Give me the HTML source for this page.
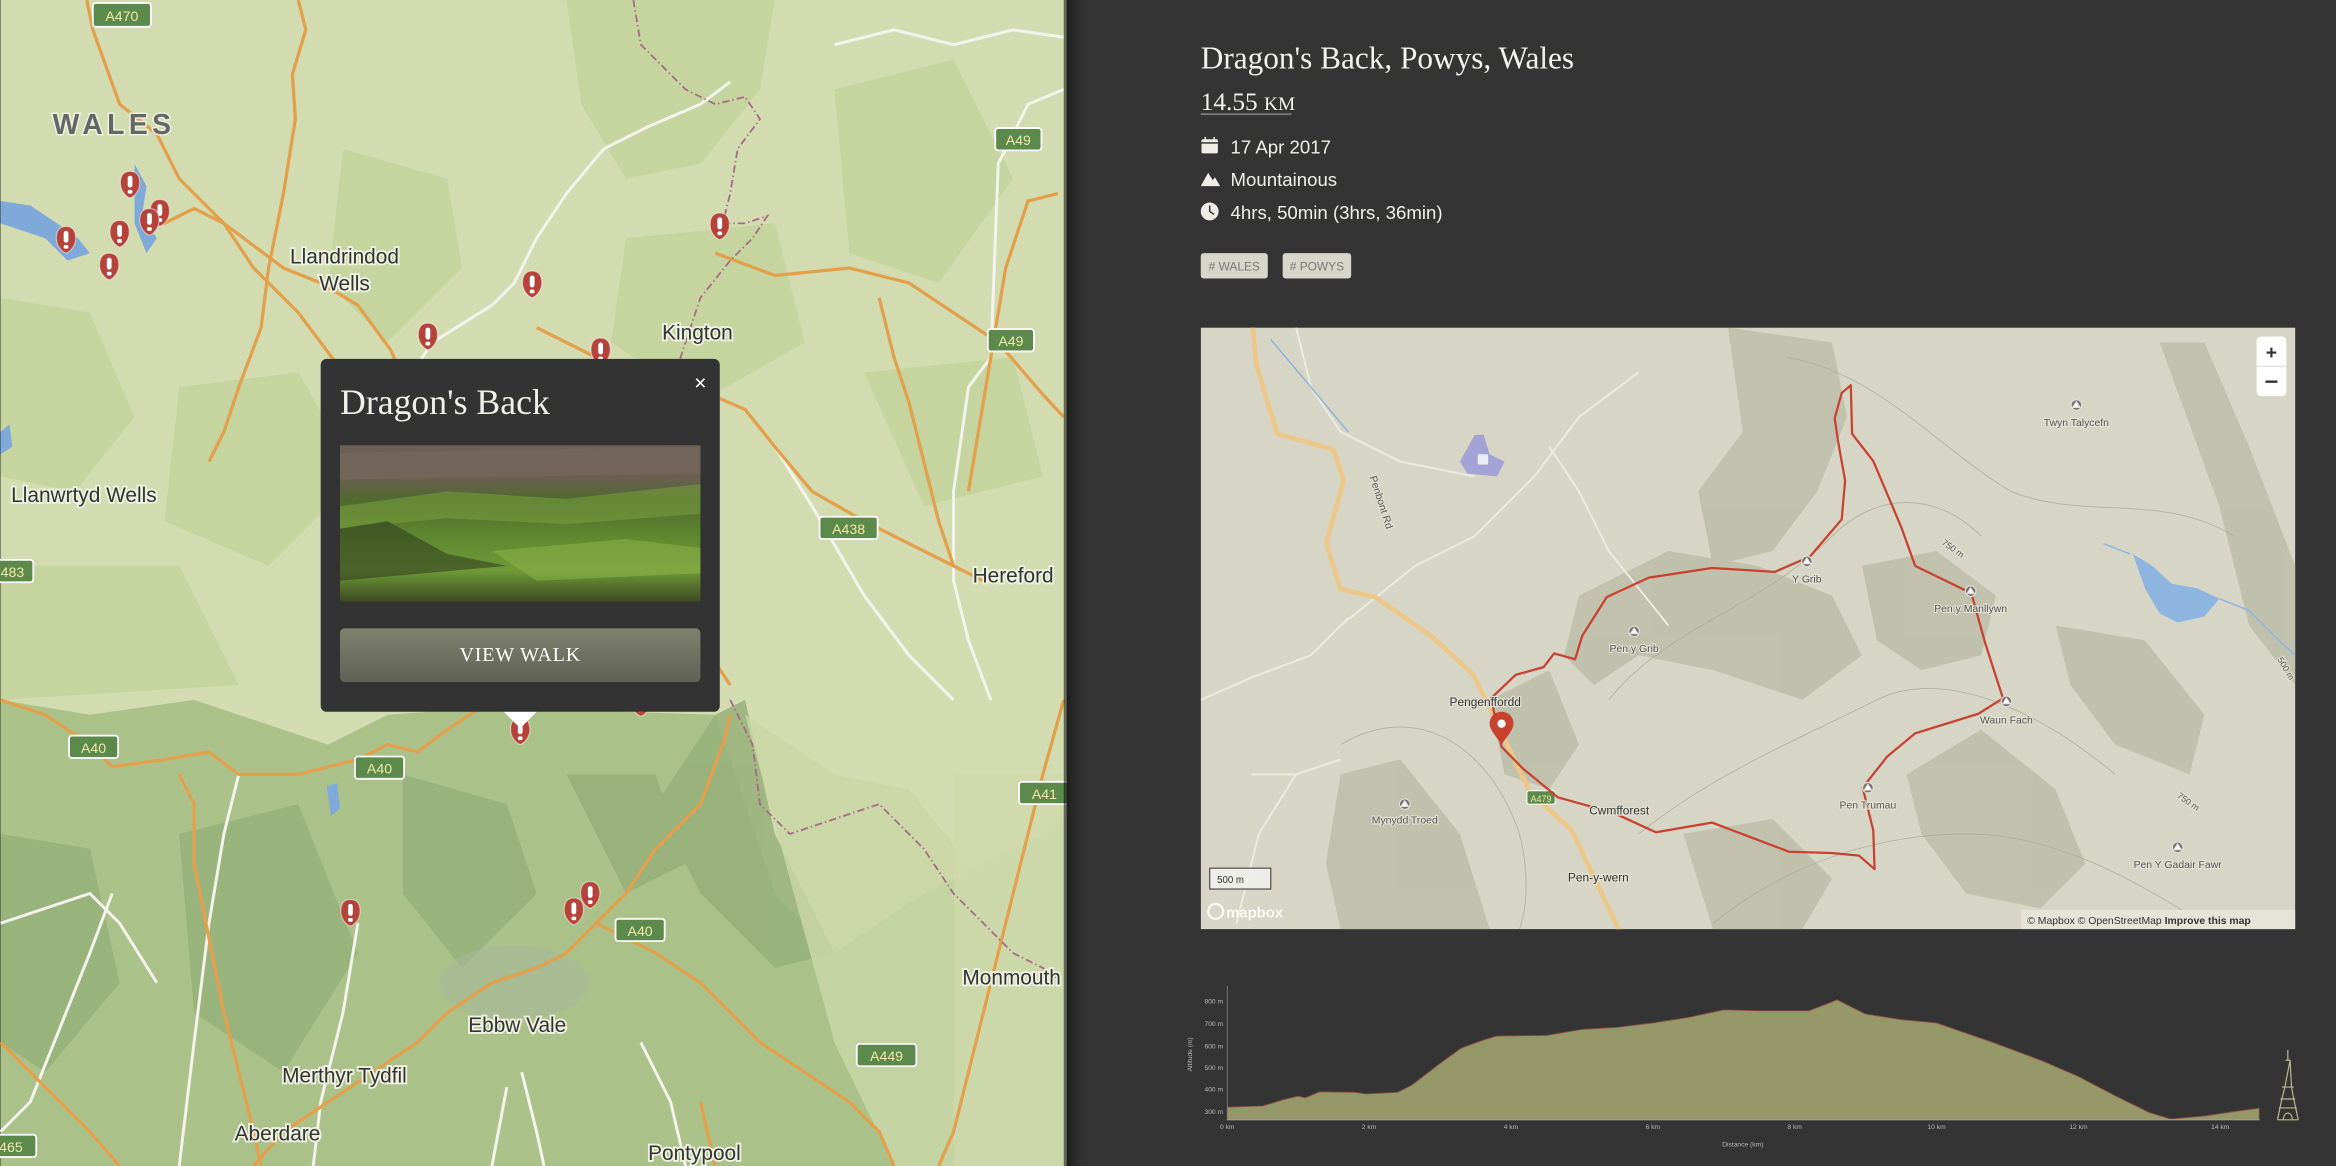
<!DOCTYPE html>
<html><head><meta charset="utf-8"><style>
html,body{margin:0;padding:0;background:#333;overflow:hidden}
svg{display:block}
</style></head><body>
<svg width="2336" height="1166" viewBox="0 0 1568 783" xmlns="http://www.w3.org/2000/svg" font-family="Liberation Sans, sans-serif">
<defs>
<linearGradient id="sh" x1="0" x2="1"><stop offset="0" stop-color="#000" stop-opacity="0.55"/><stop offset="1" stop-color="#333" stop-opacity="0"/></linearGradient>
<linearGradient id="btn" x1="0" y1="0" x2="0" y2="1"><stop offset="0" stop-color="#80836f"/><stop offset="1" stop-color="#5f6254"/></linearGradient>
<linearGradient id="photo" x1="0" y1="0" x2="0" y2="1"><stop offset="0" stop-color="#6d5f55"/><stop offset="0.22" stop-color="#6a6050"/><stop offset="0.35" stop-color="#4f6a2e"/><stop offset="0.6" stop-color="#5f8a30"/><stop offset="0.8" stop-color="#6f9a38"/><stop offset="1" stop-color="#3e4a22"/></linearGradient>
<g id="mk"><path d="M0,-9 C5,-9 6.5,-5 6.5,-1 C6.5,4 3,8 0,9 C-3,8 -6.5,4 -6.5,-1 C-6.5,-5 -5,-9 0,-9Z" fill="#b5433a" stroke="#fff" stroke-width="0.8" stroke-opacity="0.5"/><rect x="-1.6" y="-6" width="3.2" height="8" rx="1.6" fill="#fff"/><rect x="-1.6" y="3.5" width="3.2" height="2.5" rx="1" fill="#fff"/></g>
<g id="pk"><circle r="3.2" fill="#7a6f7a"/><path d="M-1.8,1.2 L0,-1.6 L1.8,1.2Z" fill="#fff"/></g>
</defs>

<!-- LEFT MAP -->
<rect x="0" y="0" width="716" height="783" fill="#d3dcb0"/>
<g fill="#c3d39c" opacity="0.8">
<path d="M380,0 L520,0 L510,60 L470,110 L420,120 L390,70Z"/>
<path d="M560,60 L640,40 L680,120 L630,190 L570,170Z"/>
<path d="M230,100 L300,120 L310,180 L260,230 L220,190Z"/>
<path d="M0,200 L60,210 L90,280 L50,330 L0,320Z"/>
<path d="M120,260 L200,250 L240,320 L180,380 L110,350Z"/>
<path d="M420,160 L520,150 L540,230 L470,270 L410,230Z"/>
<path d="M580,250 L680,240 L700,320 L620,340Z"/>
<path d="M0,380 L120,380 L160,460 L0,470Z"/>
</g>
<path d="M0,470 L60,480 L130,470 L220,500 L260,480 L330,475 L480,480 L500,540 L520,600 L560,640 L620,600 L700,560 L716,545 L716,783 L0,783Z" fill="#aac28a"/>
<g fill="#97b07a" opacity="0.85">
<path d="M480,480 L500,470 L520,560 L560,640 L520,650 L470,600 L440,540Z"/>
<path d="M120,560 L200,540 L240,640 L190,720 L130,680Z"/>
<path d="M0,560 L60,570 L80,660 L30,720 L0,700Z"/>
<path d="M270,520 L340,540 L360,600 L310,650 L270,600Z"/>
<path d="M380,520 L440,520 L460,580 L420,600Z"/>
</g>
<path d="M500,480 L560,520 L610,530 L650,580 L700,560 L716,540 L716,783 L600,783 L560,700Z" fill="#c9d6a6" opacity="0.85"/>
<path d="M640,520 L716,520 L716,783 L640,783Z" fill="#cfd9ad" opacity="0.8"/>
<ellipse cx="345" cy="660" rx="50" ry="25" fill="#a6b69a" opacity="0.6"/>
<!-- water -->
<path d="M0,135 L20,138 L38,150 L52,160 L60,170 L45,175 L30,160 L0,150Z" fill="#7fa9d9"/>
<path d="M90,110 L98,125 L95,145 L105,160 L98,170 L90,150Z" fill="#7fa9d9"/>
<path d="M219,528 L226,526 L228,543 L222,548Z" fill="#7fa9d9"/>
<path d="M0,290 L6,285 L8,300 L0,305Z" fill="#7fa9d9"/>
<!-- white roads -->
<g fill="none" stroke="#f3f3ec" stroke-width="2">
<path d="M714,60 L690,70 L670,110 L665,240 L650,260 L640,330 L640,390 L650,430 L665,470"/>
<path d="M490,55 L470,70 L435,85 L405,100 L380,130 L360,160 L345,190 L330,205 L290,230 L270,260"/>
<path d="M560,30 L600,20 L640,30 L680,20 L714,25"/>
<path d="M520,300 L545,340 L580,400 L610,440 L640,470"/>
<path d="M75,600 L60,640 L40,690 L20,740 L0,760"/>
<path d="M105,660 L80,620 L60,600 L0,620"/>
<path d="M160,520 L150,560 L140,620 L130,700 L120,783"/>
<path d="M240,620 L230,680 L215,740 L210,783"/>
<path d="M350,720 L360,760 L365,783"/>
<path d="M430,700 L450,740 L460,783"/>
<path d="M340,730 L330,783"/>
</g>
<!-- orange roads -->
<g fill="none" stroke="#e2a04c" stroke-width="2.2">
<path d="M58,0 L62,20 L80,70 L105,90 L120,120 L150,150 L170,180 L200,210 L215,230 L230,250 L250,280 L270,310 L290,340 L310,360"/>
<path d="M200,0 L205,20 L196,50 L198,80 L190,130 L180,180 L175,220 L160,260 L150,290 L140,310"/>
<path d="M105,145 L110,150 L130,140 L150,150 L170,165 L190,180 L215,190 L240,205 L262,235 L280,275 L300,300"/>
<path d="M360,220 L410,245 L440,255 L470,262 L500,275 L520,300 L545,330 L580,350 L620,370 L660,390"/>
<path d="M480,170 L520,185 L570,180 L610,190 L640,210 L670,230 L700,265 L714,280"/>
<path d="M710,130 L690,135 L675,180 L665,240 L655,300 L650,330"/>
<path d="M300,365 L330,380 L360,395 L400,400 L440,420 L470,430 L490,460"/>
<path d="M0,470 L30,480 L60,500 L75,515 L110,510 L140,505 L160,520 L200,520 L240,510 L260,500 L280,505 L300,490 L330,470"/>
<path d="M490,480 L485,500 L470,540 L440,570 L420,600 L400,620 L380,640 L360,650 L330,660 L300,680 L280,700 L250,720 L220,740 L190,760 L170,783"/>
<path d="M400,620 L420,630 L440,640 L470,660 L490,680 L510,700 L540,720 L570,740 L590,760 L600,783"/>
<path d="M120,520 L130,540 L130,580 L140,630 L150,680 L160,720 L170,760 L175,783"/>
<path d="M470,740 L480,783"/>
<path d="M714,470 L700,520 L690,560 L680,600 L670,640 L660,680 L650,720 L640,760 L630,783"/>
<path d="M590,200 L600,240 L610,270 L620,310 L630,350 L640,380"/>
<path d="M0,700 L20,720 L40,740 L60,760 L80,783"/>
</g>
<!-- border -->
<path d="M425,0 L430,30 L460,60 L480,70 L500,65 L510,80 L495,100 L490,130 L485,150 L500,150 L515,145 L505,160 L490,175 L470,200 L460,230 L450,260 L440,290 M490,470 L505,500 L510,540 L530,560 L560,550 L590,540 L620,570 L640,600 L660,620 L680,640 L700,650 L714,660" fill="none" stroke="#a66a86" stroke-width="1.2" stroke-dasharray="5,2,1,2"/>
<!-- shields -->
<g font-family="Liberation Sans Narrow, Liberation Sans, sans-serif" font-size="9.5" fill="#f3e9a8" text-anchor="middle">
<rect x="62" y="2" width="39" height="16" rx="2" fill="#5b8a4c" stroke="#fff" stroke-width="1.2"/><text x="81.5" y="14">A470</text>
<rect x="668" y="86" width="31" height="15" rx="2" fill="#5b8a4c" stroke="#fff" stroke-width="1.2"/><text x="683.5" y="97.5">A49</text>
<rect x="663" y="221" width="31" height="15" rx="2" fill="#5b8a4c" stroke="#fff" stroke-width="1.2"/><text x="678.5" y="232.5">A49</text>
<rect x="550" y="347" width="39" height="15" rx="2" fill="#5b8a4c" stroke="#fff" stroke-width="1.2"/><text x="569.5" y="358.5">A438</text>
<rect x="-6" y="376" width="28" height="15" rx="2" fill="#5b8a4c" stroke="#fff" stroke-width="1.2"/><text x="8" y="387.5">483</text>
<rect x="46" y="494" width="33" height="15" rx="2" fill="#5b8a4c" stroke="#fff" stroke-width="1.2"/><text x="62.5" y="505.5">A40</text>
<rect x="238" y="508" width="33" height="15" rx="2" fill="#5b8a4c" stroke="#fff" stroke-width="1.2"/><text x="254.5" y="519.5">A40</text>
<rect x="684" y="525" width="34" height="15" rx="2" fill="#5b8a4c" stroke="#fff" stroke-width="1.2"/><text x="701" y="536.5">A41</text>
<rect x="413" y="617" width="33" height="15" rx="2" fill="#5b8a4c" stroke="#fff" stroke-width="1.2"/><text x="429.5" y="628.5">A40</text>
<rect x="575" y="701" width="40" height="15" rx="2" fill="#5b8a4c" stroke="#fff" stroke-width="1.2"/><text x="595" y="712.5">A449</text>
<rect x="-10" y="762" width="34" height="15" rx="2" fill="#5b8a4c" stroke="#fff" stroke-width="1.2"/><text x="7" y="773.5">465</text>
</g>
<!-- place labels -->
<g font-family="Liberation Sans Narrow, Liberation Sans, sans-serif" font-size="14" fill="#333" stroke="#eef0e0" stroke-width="2.5" paint-order="stroke" text-anchor="middle">
<text x="231" y="177">Llandrindod</text><text x="231" y="195">Wells</text>
<text x="468" y="228">Kington</text>
<text x="56" y="337">Llanwrtyd Wells</text>
<text x="680" y="391">Hereford</text>
<text x="679" y="661">Monmouth</text>
<text x="347" y="693">Ebbw Vale</text>
<text x="231" y="727">Merthyr Tydfil</text>
<text x="186" y="766">Aberdare</text>
<text x="466" y="779">Pontypool</text>
</g>
<text x="35" y="90" font-size="19" font-weight="bold" fill="#666" letter-spacing="3" stroke="#eef0e0" stroke-width="2" paint-order="stroke">WALES</text>
<!-- markers -->
<use href="#mk" x="87" y="124"/><use href="#mk" x="107" y="143"/><use href="#mk" x="100" y="149"/><use href="#mk" x="80" y="157"/><use href="#mk" x="44" y="161"/><use href="#mk" x="73" y="179"/><use href="#mk" x="483" y="152"/><use href="#mk" x="357" y="191"/><use href="#mk" x="287" y="226"/><use href="#mk" x="403" y="236"/><use href="#mk" x="430" y="472"/><use href="#mk" x="235" y="613"/><use href="#mk" x="396" y="601"/><use href="#mk" x="385" y="612"/>
<use href="#mk" x="349" y="491"/>
<!-- popup -->
<path d="M337,477 L361,477 L349,489Z" fill="#fff"/>
<rect x="215" y="241" width="268" height="237" rx="4" fill="#333"/>
<text x="228" y="278" font-family="Liberation Serif, serif" font-size="24" fill="#f0f0ea">Dragon's Back</text>
<text x="470" y="262" font-size="14" fill="#fff" text-anchor="middle">×</text>
<rect x="228" y="299" width="242" height="105" fill="url(#photo)"/>
<g opacity="0.55">
<path d="M228,340 L300,330 L380,335 L470,325 L470,345 L380,352 L300,348 L228,355Z" fill="#7aa040"/>
<path d="M228,355 L260,350 L300,372 L340,380 L228,390Z" fill="#2e3a1e"/>
<path d="M330,370 L420,362 L470,368 L470,385 L360,390Z" fill="#8cb34a"/>
<path d="M228,304 L470,300 L470,318 L228,322Z" fill="#7b6a60"/>
</g>
<rect x="228" y="422" width="242" height="36" rx="3" fill="url(#btn)"/>
<text x="349" y="444" font-family="Liberation Serif, serif" font-size="13.5" fill="#fff" text-anchor="middle" letter-spacing="0.5">VIEW WALK</text>

<!-- RIGHT PANEL -->
<rect x="716" y="0" width="852" height="783" fill="#343434"/>
<rect x="714" y="0" width="18" height="783" fill="url(#sh)"/>
<text x="806" y="46" font-family="Liberation Serif, serif" font-size="21" fill="#f2f2ec">Dragon's Back, Powys, Wales</text>
<text x="806" y="74" font-family="Liberation Serif, serif" font-size="17" fill="#f2f2ec">14.55 <tspan font-size="13">KM</tspan></text>
<rect x="806" y="76" width="61" height="1.3" fill="#777"/>
<!-- icons -->
<rect x="806.5" y="93.5" width="11" height="9.5" rx="1" fill="#eeeee6"/><rect x="806.5" y="95.5" width="11" height="1" fill="#343434"/><rect x="808.5" y="92" width="1" height="3" fill="#eeeee6"/><rect x="814.5" y="92" width="1" height="3" fill="#eeeee6"/>
<path d="M806,125 L811,116 L814,121 L815.5,119 L819,125Z" fill="#eeeee6"/>
<circle cx="812" cy="142" r="6" fill="#eeeee6"/><path d="M812,138 L812,142 L815,144" stroke="#343434" stroke-width="1" fill="none"/>
<g font-family="Liberation Sans Narrow, Liberation Sans, sans-serif" font-size="12.5" fill="#f0f0ea">
<text x="826" y="103">17 Apr 2017</text>
<text x="826" y="125">Mountainous</text>
<text x="826" y="147">4hrs, 50min (3hrs, 36min)</text>
</g>
<rect x="806" y="170" width="45" height="17" rx="2" fill="#d6d6ca"/><rect x="861" y="170" width="46" height="17" rx="2" fill="#d6d6ca"/>
<g font-family="Liberation Sans Narrow, Liberation Sans, sans-serif" font-size="8" fill="#777" text-anchor="middle"><text x="828.5" y="181.5"># WALES</text><text x="884" y="181.5"># POWYS</text></g>

<!-- route map -->
<svg x="806" y="220" width="735" height="404" viewBox="806 220 735 404">
<rect x="806" y="220" width="735" height="404" fill="#d7d6c6"/>
<g fill="#b9baa5" opacity="0.75">
<path d="M1160,220 L1230,230 L1240,280 L1220,330 L1190,370 L1150,380 L1140,330 L1170,290Z"/>
<path d="M1060,400 L1120,370 L1180,380 L1230,400 L1250,440 L1210,470 L1150,450 L1100,440 L1070,460 L1050,440Z"/>
<path d="M1250,380 L1300,370 L1340,400 L1330,440 L1290,450 L1260,430Z"/>
<path d="M900,520 L940,510 L980,560 L1000,624 L900,624 L890,580Z"/>
<path d="M1280,520 L1330,490 L1380,530 L1400,580 L1370,610 L1320,600 L1290,560Z"/>
<path d="M1450,230 L1480,230 L1510,300 L1541,380 L1541,460 L1510,420 L1490,340Z"/>
<path d="M1130,560 L1190,550 L1230,590 L1210,624 L1150,624Z"/>
<path d="M1000,470 L1040,450 L1060,500 L1040,530 L1010,520Z"/>
<path d="M1380,420 L1440,430 L1480,480 L1470,520 L1420,500 L1390,460Z"/>
</g>
<g fill="none" stroke="#a9a994" stroke-width="0.6" opacity="0.8">
<path d="M1100,560 C1150,520 1200,500 1260,470 C1300,450 1360,470 1420,520"/>
<path d="M1080,470 C1120,420 1180,410 1230,360 C1260,330 1300,330 1330,360"/>
<path d="M1150,620 C1200,580 1260,560 1320,560 C1380,560 1430,590 1480,620"/>
<path d="M900,500 C950,470 1000,500 1020,560 C1030,600 1020,624 1020,624"/>
<path d="M1200,240 C1260,250 1300,300 1350,330 C1400,350 1450,330 1500,360"/>
</g>
<g fill="none" stroke="#ecebe2" stroke-width="1.3">
<path d="M900,420 L950,380 L990,360 L1030,320 L1060,280 L1100,250"/>
<path d="M1120,420 L1080,370 L1060,330 L1040,300"/>
<path d="M806,470 L840,455 L880,440 L905,415"/>
<path d="M840,520 L870,520 L900,510"/>
<path d="M830,620 L845,560 L870,520"/>
<path d="M870,220 L880,260 L900,290 L940,310 L990,320"/>
</g>
<path d="M840.8,218 L843.2,244.3 L857.3,291.3 L895,301.8 L902,322.6 L890.3,364.4 L899.7,395.7 L923.2,401 L960.9,427.1 L989.2,453.2 L1008,492.4 L1026.8,531.5 L1055.1,557.6 L1088,627" fill="none" stroke="#ebc78a" stroke-width="3.2"/>
<path d="M853,228 L880,260 L905,290" fill="none" stroke="#8cb4d8" stroke-width="1"/>
<path d="M1432,372 L1445,380 L1458,392 L1475,395 L1490,402 L1480,414 L1462,418 L1450,412 L1440,395Z" fill="#8db5df"/>
<path d="M1490,402 L1510,410 L1530,430 L1541,440" fill="none" stroke="#8db5df" stroke-width="1"/>
<path d="M1412,365 L1430,372" fill="none" stroke="#8db5df" stroke-width="1"/>
<path d="M990,292 L996,292 L1000,305 L1010,310 L1005,320 L985,318 L980,310Z" fill="#a4a3d6"/>
<rect x="992" y="305" width="7" height="7" rx="1" fill="#fff" opacity="0.8"/>
<rect x="1025" y="531" width="19" height="9" rx="1.5" fill="#5b8a4c" stroke="#fff" stroke-width="0.7"/><text x="1034.5" y="538.5" font-size="6" fill="#f3e9a8" text-anchor="middle">A479</text>
<path d="M1008,501.5 L1000.9,468.9 L1017.4,453.2 L1036.2,448 L1043.3,438.8 L1057.4,442.7 L1062.1,427.1 L1078.6,401 L1106.9,387.9 L1149.3,381.4 L1191.6,384 L1215.2,373.6 L1236.4,348.8 L1238.7,322.6 L1234,296.5 L1231.7,280.9 L1236.4,263.9 L1242.5,258.7 L1243.4,291.3 L1257.6,309.6 L1276.4,354 L1285.8,380.1 L1323.5,398.4 L1332.9,432.3 L1344.7,468.9 L1328.2,479.3 L1285.8,492.4 L1267,508 L1250.5,528.9 L1257.6,557.6 L1258.5,583.7 L1248.1,574.6 L1229.3,572.8 L1201.1,572 L1149.3,552.4 L1111.6,558.9 L1083.3,545.9 L1045.7,535.4 L1022.1,515.9 Z" fill="none" stroke="#c8412f" stroke-width="1.5" stroke-linejoin="round"/>
<g font-size="7" fill="#555" text-anchor="middle" stroke="#e2e1d4" stroke-width="1.5" paint-order="stroke">
<use href="#pk" x="1394" y="272"/><text x="1394" y="286">Twyn Talycefn</text>
<use href="#pk" x="1213" y="377"/><text x="1213" y="391">Y Grib</text>
<use href="#pk" x="1323" y="397"/><text x="1323" y="411">Pen y Manllywn</text>
<use href="#pk" x="1097" y="424"/><text x="1097" y="438">Pen y Grib</text>
<use href="#pk" x="1347" y="471"/><text x="1347" y="486">Waun Fach</text>
<use href="#pk" x="943" y="540"/><text x="943" y="553">Mynydd Troed</text>
<use href="#pk" x="1254" y="529"/><text x="1254" y="543">Pen Trumau</text>
<use href="#pk" x="1462" y="569"/><text x="1462" y="583">Pen Y Gadair Fawr</text>
<text x="997" y="474" font-size="8" fill="#333">Pengenffordd</text>
<text x="1087" y="547" font-size="8" fill="#333">Cwmfforest</text>
<text x="1073" y="592" font-size="8" fill="#333">Pen-y-wern</text>
<text x="925" y="338" transform="rotate(72 925 338)">Penbont Rd</text>
<text x="1310" y="370" font-size="6" transform="rotate(35 1310 370)">750 m</text>
<text x="1468" y="540" font-size="6" transform="rotate(35 1468 540)">750 m</text>
<text x="1533" y="450" font-size="6" transform="rotate(60 1533 450)">500 m</text>
</g>
<path d="M1008,500 C1004,494 1000,490 1000,486 C1000,481 1004,478 1008,478 C1012,478 1016,481 1016,486 C1016,490 1012,494 1008,500Z" fill="#c8412f"/>
<circle cx="1008" cy="486" r="2.8" fill="#fff"/>
<rect x="1515" y="226" width="20" height="40" rx="3" fill="#fff"/><line x1="1515" y1="246" x2="1535" y2="246" stroke="#ddd" stroke-width="0.8"/>
<text x="1525" y="241" font-size="13" font-weight="bold" fill="#333" text-anchor="middle">+</text>
<rect x="1521" y="255.5" width="8" height="1.6" fill="#333"/>
<rect x="812" y="583" width="41" height="14" fill="#f3f3ee" opacity="0.85" stroke="#333" stroke-width="0.8"/><text x="817" y="593" font-size="6.5" fill="#333">500 m</text>
<circle cx="816" cy="612" r="5" fill="none" stroke="#fff" stroke-width="1.5" opacity="0.85"/>
<text x="823" y="616" font-size="10" font-weight="bold" fill="#fff" opacity="0.85">mapbox</text>
<rect x="1357" y="611" width="184" height="13" fill="#e6e5da" opacity="0.9"/>
<text x="1361" y="620.5" font-size="7" fill="#333">© Mapbox © OpenStreetMap <tspan font-weight="bold">Improve this map</tspan></text>
</svg>

<!-- elevation chart -->
<path d="M823.8,743.5 L847.6,742.7 L861.9,738.3 L871.4,736.1 L876.2,737.2 L885.7,733.2 L909.5,733.5 L916.7,734.6 L938.1,733.5 L947.6,728.8 L957.2,721.4 L966.7,714.1 L981,703.8 L995.3,698.6 L1004.8,695.7 L1038.1,695.3 L1062,691.3 L1085.8,689.9 L1109.6,686.9 L1133.4,683.2 L1157.2,678.1 L1181,678.8 L1204.8,678.8 L1214.4,678.8 L1233.4,671.4 L1252.5,681 L1276.3,684.7 L1300.1,686.9 L1338.2,700.1 L1371.6,712.6 L1395.4,722.9 L1419.2,735.4 L1443,747.1 L1457.3,751.5 L1481.1,749.3 L1500.2,746.4 L1516.8,744.2 L1516.8,751.8 L823.8,751.8Z" fill="#979869" stroke="#8b4c3e" stroke-width="0.6"/>
<line x1="823.8" y1="662" x2="823.8" y2="752" stroke="#888" stroke-width="0.5"/>
<line x1="823.8" y1="752" x2="1517" y2="752" stroke="#bbb" stroke-width="0.6"/>
<g font-size="4.5" fill="#bbb">
<g text-anchor="end"><text x="821" y="674">800 m</text><text x="821" y="689">700 m</text><text x="821" y="704">600 m</text><text x="821" y="718.5">500 m</text><text x="821" y="733">400 m</text><text x="821" y="748">300 m</text></g>
<g text-anchor="middle"><text x="823.8" y="758">0 km</text><text x="919" y="758">2 km</text><text x="1014.3" y="758">4 km</text><text x="1109.6" y="758">6 km</text><text x="1204.8" y="758">8 km</text><text x="1300.1" y="758">10 km</text><text x="1395.4" y="758">12 km</text><text x="1490.6" y="758">14 km</text>
<text x="1170" y="770">Distance (km)</text></g>
<text x="800" y="708" transform="rotate(-90 800 708)" text-anchor="middle">Altitude (m)</text>
</g>
<g fill="none" stroke="#b9b98c" stroke-width="0.8">
<path d="M1536,705 L1536,712 M1534.5,712 L1537.5,712 L1538.5,730 L1540,738 L1543,752 M1537.5,712 L1534,730 L1532,738 L1529,752"/>
<path d="M1532,730 L1540,730 M1531,738 L1541,738 M1530,744 L1542,744 M1529,752 L1543,752"/>
<path d="M1533,752 C1533,746 1539,746 1539,752"/>
</g>
</svg>
</body></html>
